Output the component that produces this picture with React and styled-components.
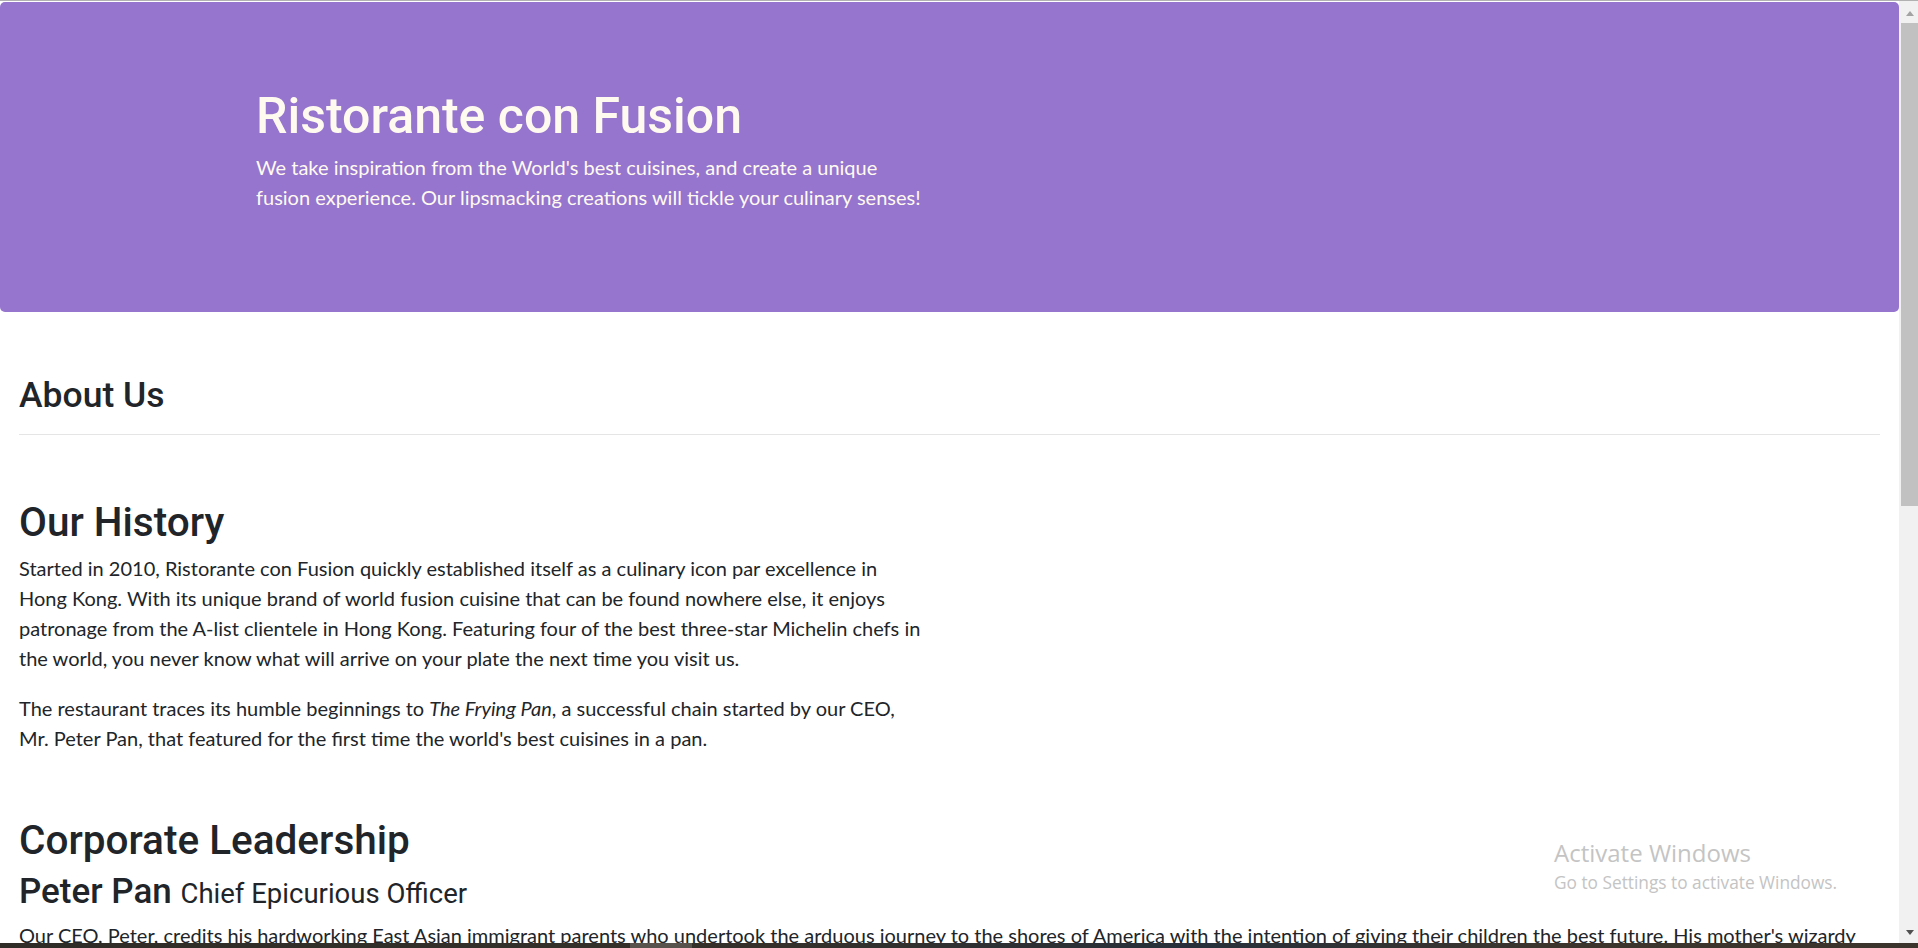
import React from "react";
import styled, { createGlobalStyle } from "styled-components";

const Global = createGlobalStyle`
  html, body, #root { height: 100%; }
  body {
    margin: 0;
    overflow: hidden;
    background: #ffffff;
    color: #212529;
    font-family: "Lato", "Open Sans", sans-serif;
    font-size: 20px;
    line-height: 30px;
  }
  * { box-sizing: border-box; }
`;

const Screen = styled.div`
  position: relative;
  height: 100vh;
  display: flex;
  flex-direction: column;
  overflow: hidden;
`;

const TopEdge = styled.div`
  flex: none;
  height: 1px;
  background: #b1b1b1;
`;

const Viewport = styled.div`
  flex: 1;
  min-height: 0;
  display: flex;
`;

const Page = styled.main`
  flex: 1;
  min-width: 0;
  overflow: hidden;
  padding-top: 1px;
`;

const Jumbotron = styled.header`
  height: 310px;
  padding: 80px 40px;
  border-radius: 5px;
  background: #9575cd;
  color: floralwhite;
`;

const HeroContainer = styled.div`
  max-width: 1425px;
  margin: 0 auto;
  padding: 0 19px;
`;

const HeroColumn = styled.div`
  width: 675px;
`;

const HeroTitle = styled.h1`
  margin: 4px 0 6px;
  font-family: "Roboto", sans-serif;
  font-weight: 500;
  font-size: 50px;
  line-height: 60px;
`;

const Paragraph = styled.p`
  margin: 0 0 20px;
  font-size: 20px;
  line-height: 30px;
`;

const Container = styled.div`
  padding: 62px 19px 0;
`;

const SectionHeading = styled.h3`
  margin: 0 0 18px;
  font-family: "Roboto", sans-serif;
  font-weight: 500;
  font-size: 35.5px;
  line-height: 42px;
`;

const Divider = styled.hr`
  margin: 0 0 20px;
  border: 0;
  border-top: 1px solid rgba(0, 0, 0, 0.1);
`;

const Section = styled.section`
  padding-top: 40px;
`;

const TextColumn = styled.div`
  width: ${(p) => (p.$half ? "940px" : "100%")};
`;

const Title = styled.h2`
  margin: 3px 0 7px;
  font-family: "Roboto", sans-serif;
  font-weight: 500;
  font-size: 40.5px;
  line-height: 48px;
`;

const LeaderName = styled.h3`
  margin: 6px 0 5px;
  font-family: "Roboto", sans-serif;
  font-weight: 500;
  font-size: 35px;
  line-height: 42px;
`;

const LeaderRole = styled.small`
  font-weight: 400;
  font-size: 27.5px;
`;

const Scrollbar = styled.aside`
  flex: none;
  width: 19px;
  padding-left: 2px;
  background: #f1f1f1;
  display: flex;
  flex-direction: column;
`;

const ScrollButton = styled.div`
  flex: none;
  height: 22px;
  display: flex;
  align-items: center;
  justify-content: center;
  padding-top: ${(p) => (p.$up ? "3px" : "0")};
`;

const Arrow = styled.span`
  width: 0;
  height: 0;
  border-left: 4px solid transparent;
  border-right: 4px solid transparent;
  ${(p) =>
    p.$up
      ? "border-bottom: 5px solid #a3a3a3;"
      : "border-top: 5px solid #505050;"}
`;

const Thumb = styled.div`
  flex: none;
  height: 483px;
  background: #c1c1c1;
`;

const TrackSpace = styled.div`
  flex: 1;
`;

const Taskbar = styled.footer`
  flex: none;
  height: 5px;
  display: flex;
  background: linear-gradient(90deg, #2f2c27 0%, #35302a 40%, #27303a 62%, #3b352e 80%, #3a342d 100%);
`;

const TaskbarItem = styled.div`
  flex: none;
  margin-left: ${(p) => p.$offset}px;
  width: ${(p) => p.$width}px;
  background: #58534d;
`;

const Watermark = styled.div`
  position: absolute;
  left: 1554px;
  top: 837px;
  color: #c4c4c4;
  font-family: "Open Sans", sans-serif;
  pointer-events: none;
`;

const WatermarkTitle = styled.div`
  font-size: 24px;
  line-height: 32px;
`;

const WatermarkText = styled.div`
  margin-top: 2px;
  font-size: 17.3px;
  line-height: 23px;
`;

export default function App() {
  return (
    <>
      <Global />
      <Screen>
        <TopEdge />
        <Viewport>
          <Page>
            <Jumbotron>
              <HeroContainer>
                <HeroColumn>
                  <HeroTitle>Ristorante con Fusion</HeroTitle>
                  <Paragraph>
                    We take inspiration from the World's best cuisines, and create a unique
                    fusion experience. Our lipsmacking creations will tickle your culinary senses!
                  </Paragraph>
                </HeroColumn>
              </HeroContainer>
            </Jumbotron>
            <Container>
              <SectionHeading>About Us</SectionHeading>
              <Divider />
              <Section>
                <TextColumn $half>
                  <Title>Our History</Title>
                  <Paragraph>
                    Started in 2010, Ristorante con Fusion quickly established itself as a culinary
                    icon par excellence in
                    <br />
                    Hong Kong. With its unique brand of world fusion cuisine that can be found
                    nowhere else, it enjoys
                    <br />
                    patronage from the A-list clientele in Hong Kong. Featuring four of the best
                    three-star Michelin chefs in
                    <br />
                    the world, you never know what will arrive on your plate the next time you visit
                    us.
                  </Paragraph>
                  <Paragraph>
                    The restaurant traces its humble beginnings to <em>The Frying Pan</em>, a
                    successful chain started by our CEO,
                    <br />
                    Mr. Peter Pan, that featured for the first time the world's best cuisines in a
                    pan.
                  </Paragraph>
                </TextColumn>
              </Section>
              <Section>
                <TextColumn>
                  <Title>Corporate Leadership</Title>
                  <LeaderName>
                    Peter Pan <LeaderRole>Chief Epicurious Officer</LeaderRole>
                  </LeaderName>
                  <Paragraph>
                    Our CEO, Peter, credits his hardworking East Asian immigrant parents who
                    undertook the arduous journey to the shores of America with the intention of
                    giving their children the best future. His mother's wizardy
                    <br />
                    in the kitchen whipping up the tastiest dishes at a shoestring budget became the
                    inspiration for his career in the culinary arts.
                  </Paragraph>
                </TextColumn>
              </Section>
            </Container>
          </Page>
          <Scrollbar>
            <ScrollButton $up>
              <Arrow $up />
            </ScrollButton>
            <Thumb />
            <TrackSpace />
            <ScrollButton>
              <Arrow />
            </ScrollButton>
          </Scrollbar>
        </Viewport>
        <Taskbar>
          <TaskbarItem $offset={630} $width={62} />
        </Taskbar>
        <Watermark>
          <WatermarkTitle>Activate Windows</WatermarkTitle>
          <WatermarkText>Go to Settings to activate Windows.</WatermarkText>
        </Watermark>
      </Screen>
    </>
  );
}
